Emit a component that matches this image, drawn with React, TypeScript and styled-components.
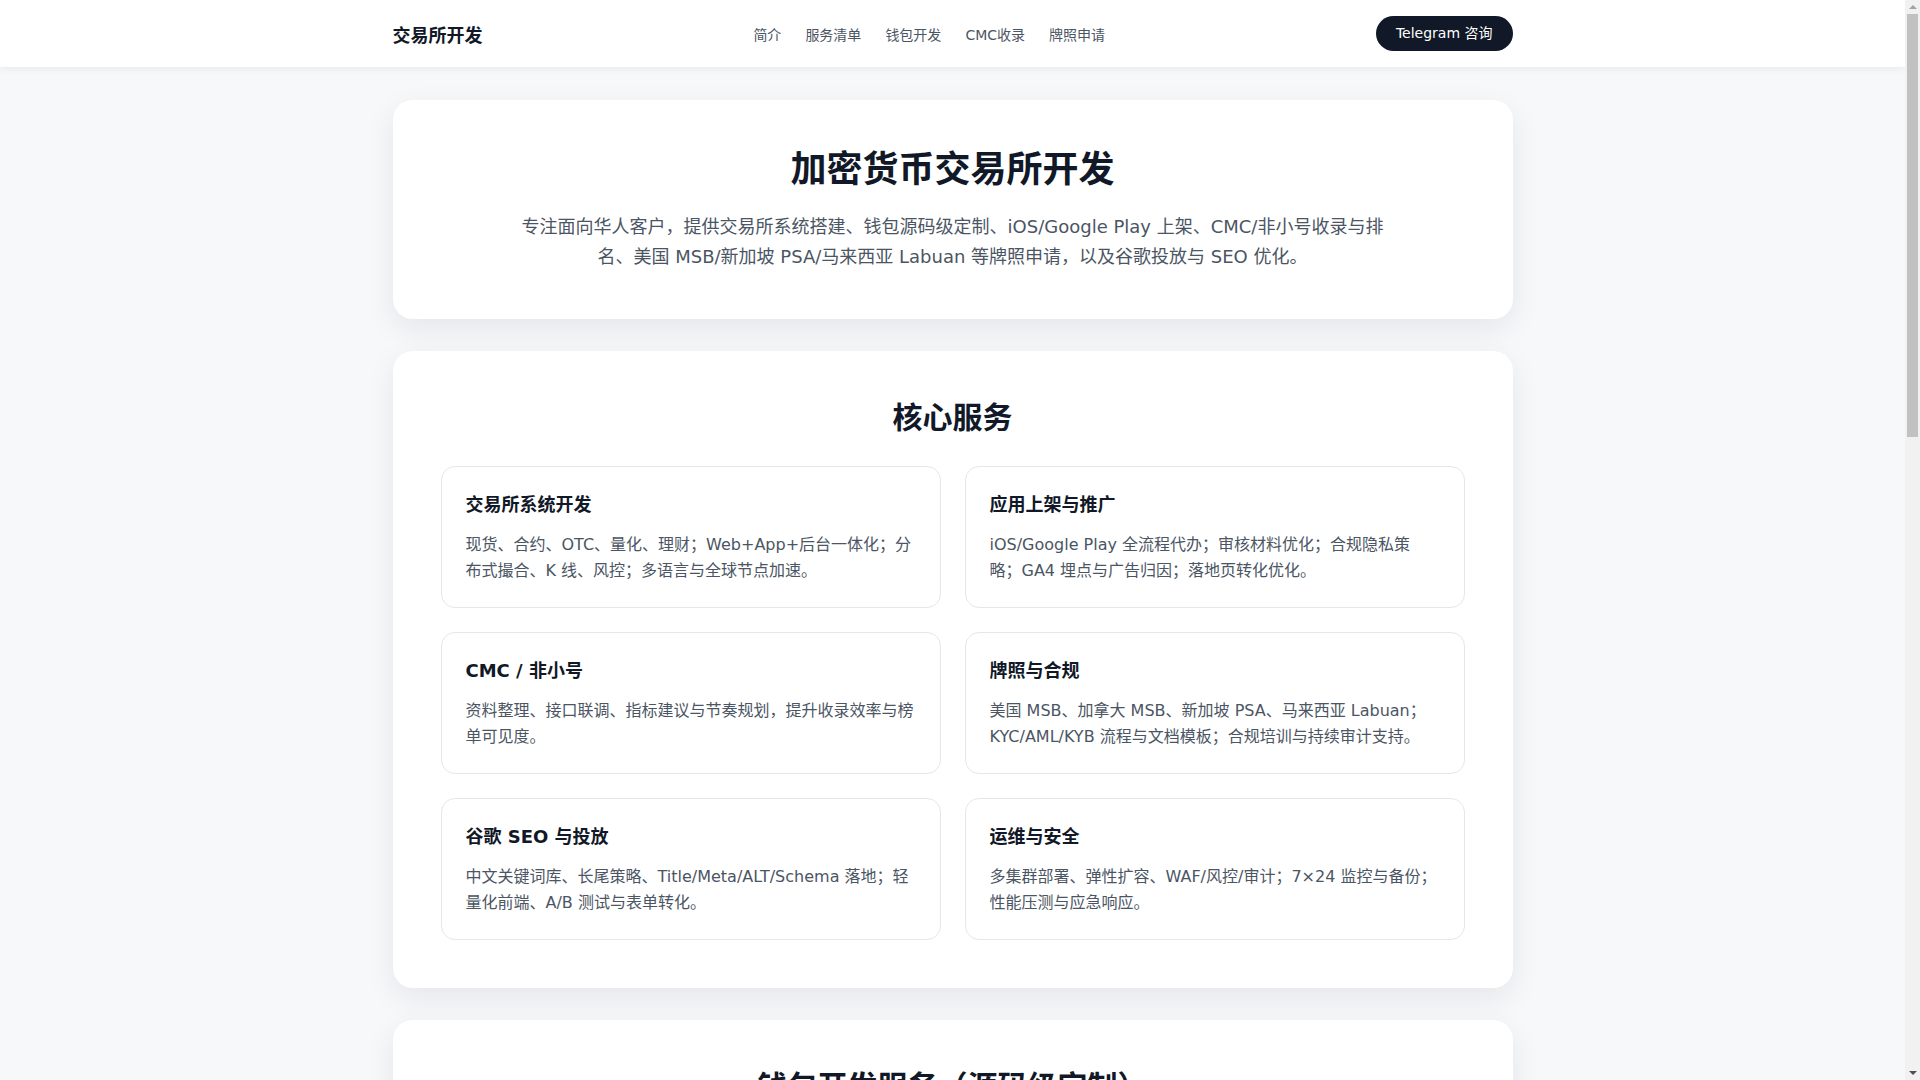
import styled, { createGlobalStyle } from 'styled-components';

const GlobalStyle = createGlobalStyle`
  * {
    box-sizing: border-box;
  }

  body {
    margin: 0;
    padding-right: 15px;
    background: #f7f8fa;
    color: #111827;
    font-family: "DejaVu Sans", "Noto Sans CJK SC", sans-serif;
  }
`;

interface Service {
  title: string;
  text: string;
}

const coreServices: Service[] = [
  {
    title: '交易所系统开发',
    text: '现货、合约、OTC、量化、理财；Web+App+后台一体化；分布式撮合、K 线、风控；多语言与全球节点加速。',
  },
  {
    title: '应用上架与推广',
    text: 'iOS/Google Play 全流程代办；审核材料优化；合规隐私策略；GA4 埋点与广告归因；落地页转化优化。',
  },
  {
    title: 'CMC / 非小号',
    text: '资料整理、接口联调、指标建议与节奏规划，提升收录效率与榜单可见度。',
  },
  {
    title: '牌照与合规',
    text: '美国 MSB、加拿大 MSB、新加坡 PSA、马来西亚 Labuan；KYC/AML/KYB 流程与文档模板；合规培训与持续审计支持。',
  },
  {
    title: '谷歌 SEO 与投放',
    text: '中文关键词库、长尾策略、Title/Meta/ALT/Schema 落地；轻量化前端、A/B 测试与表单转化。',
  },
  {
    title: '运维与安全',
    text: '多集群部署、弹性扩容、WAF/风控/审计；7×24 监控与备份；性能压测与应急响应。',
  },
];

const walletServices: Service[] = [
  {
    title: '多链钱包',
    text: 'BTC、ETH、TRON、BSC、Solana 等主流公链；HD 钱包、助记词与多签方案。',
  },
  {
    title: '源码交付',
    text: '完整前后端与 App 源码交付；私有化部署；二次开发与品牌定制。',
  },
  {
    title: '资产安全',
    text: '冷热分离、MPC 签名、地址白名单与风控规则；安全审计报告。',
  },
  {
    title: 'DApp 浏览器',
    text: 'WalletConnect 接入、Swap 聚合、NFT 展示与链上行情。',
  },
];

const licenseServices: Service[] = [
  {
    title: 'CMC 收录',
    text: '项目资料准备、API 对接与数据校验，跟进审核进度。',
  },
  {
    title: '牌照申请',
    text: '美国 MSB、新加坡 PSA、马来西亚 Labuan 等牌照申请与年审。',
  },
];

const navLinks = ['简介', '服务清单', '钱包开发', 'CMC收录', '牌照申请'];

const ServiceCard = ({ title, text }: Service) => (
  <Item>
    <ItemTitle>{title}</ItemTitle>
    <ItemText>{text}</ItemText>
  </Item>
);

const App = () => (
  <>
    <GlobalStyle />
    <Header>
      <HeaderInner>
        <Brand>交易所开发</Brand>
        <Nav>
          {navLinks.map((link) => (
            <NavLink key={link} href="#">
              {link}
            </NavLink>
          ))}
        </Nav>
        <ContactButton href="#">Telegram 咨询</ContactButton>
      </HeaderInner>
    </Header>

    <Main>
      <Card>
        <HeroTitle>加密货币交易所开发</HeroTitle>
        <HeroText>
          专注面向华人客户，提供交易所系统搭建、钱包源码级定制、iOS/Google Play 上架、CMC/非小号收录与排名、美国 MSB/新加坡 PSA/马来西亚 Labuan 等牌照申请，以及谷歌投放与 SEO 优化。
        </HeroText>
      </Card>

      <Card>
        <SectionTitle>核心服务</SectionTitle>
        <Grid>
          {coreServices.map((service) => (
            <ServiceCard key={service.title} {...service} />
          ))}
        </Grid>
      </Card>

      <Card>
        <SectionTitle>钱包开发服务（源码级定制）</SectionTitle>
        <Grid>
          {walletServices.map((service) => (
            <ServiceCard key={service.title} {...service} />
          ))}
        </Grid>
      </Card>

      <Card>
        <SectionTitle>CMC 收录与牌照申请</SectionTitle>
        <Grid>
          {licenseServices.map((service) => (
            <ServiceCard key={service.title} {...service} />
          ))}
        </Grid>
      </Card>

      <Footer>© 交易所开发 · Telegram 咨询</Footer>
    </Main>

    <ScrollTrack>
      <ScrollArrow $dir="up" />
      <ScrollThumb />
      <ScrollArrow $dir="down" />
    </ScrollTrack>
  </>
);

export default App;

const Header = styled.header`
  background: #ffffff;
  box-shadow: 0 2px 8px rgba(15, 23, 42, 0.06);
`;

const HeaderInner = styled.div`
  display: flex;
  align-items: center;
  justify-content: space-between;
  max-width: 1120px;
  margin: 0 auto;
  padding: 16px 0;
`;

const Brand = styled.div`
  font-size: 18px;
  font-weight: 700;
  color: #111827;
`;

const Nav = styled.nav`
  display: flex;
  align-items: center;
  gap: 24px;
`;

const NavLink = styled.a`
  font-size: 14px;
  color: #4b5563;
  text-decoration: none;
`;

const ContactButton = styled.a`
  display: inline-flex;
  align-items: center;
  padding: 8px 20px;
  border-radius: 999px;
  background: #111827;
  color: #ffffff;
  font-size: 14px;
  line-height: 19px;
  text-decoration: none;
`;

const Main = styled.main`
  display: flex;
  flex-direction: column;
  gap: 32px;
  max-width: 1120px;
  margin: 0 auto;
  padding: 33px 0 32px;
`;

const Card = styled.section`
  background: #ffffff;
  border-radius: 20px;
  padding: 48px;
  box-shadow: 0 10px 30px rgba(15, 23, 42, 0.08);
  text-align: center;
`;

const HeroTitle = styled.h1`
  margin: 0 0 21px;
  font-size: 36px;
  line-height: 1.2;
  font-weight: 700;
  color: #111827;
`;

const HeroText = styled.p`
  max-width: 880px;
  margin: 0 auto;
  font-size: 18px;
  line-height: 1.63;
  color: #4b5563;
`;

const SectionTitle = styled.h2`
  margin: 0 0 30px;
  font-size: 30px;
  line-height: 1.25;
  font-weight: 700;
  color: #111827;
`;

const Grid = styled.div`
  display: grid;
  grid-template-columns: 1fr 1fr;
  gap: 24px;
  text-align: left;
`;

const Item = styled.div`
  padding: 24px;
  border: 1px solid #e5e7eb;
  border-radius: 14px;
  background: #ffffff;
`;

const ItemTitle = styled.h3`
  margin: 0 0 12px;
  font-size: 18px;
  line-height: 1.6;
  font-weight: 700;
  color: #111827;
`;

const ItemText = styled.p`
  margin: 0;
  font-size: 16px;
  line-height: 1.6;
  color: #4b5563;
`;

const Footer = styled.footer`
  padding: 8px 0 24px;
  text-align: center;
  font-size: 14px;
  color: #6b7280;
`;

/* the browser's scrollbar, as it shows in the screenshot */
const ScrollTrack = styled.div`
  position: fixed;
  top: 0;
  right: 0;
  bottom: 0;
  width: 15px;
  display: flex;
  flex-direction: column;
  align-items: center;
  background: #f1f1f1;
`;

const ScrollThumb = styled.div`
  width: 11px;
  height: 423px;
  background: #c1c1c1;
  margin-bottom: auto;
`;

const ScrollArrow = styled.div<{ $dir: 'up' | 'down' }>`
  width: 0;
  height: 0;
  margin: 5px 0;
  border-left: 4px solid transparent;
  border-right: 4px solid transparent;
  ${({ $dir }) =>
    $dir === 'up'
      ? 'border-bottom: 4px solid #a3a3a3;'
      : 'border-top: 4px solid #505050;'}
`;
